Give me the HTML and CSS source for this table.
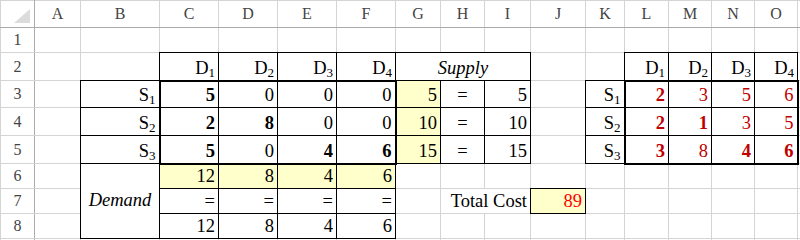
FILE: index.html
```html
<!DOCTYPE html>
<html>
<head>
<meta charset="utf-8">
<link rel="stylesheet" href="styles.css">
</head>
<body>
<table class="sheet">
  <colgroup>
    <col class="w-rh"><col class="w-a"><col class="w-b"><col class="w-c"><col class="w-c"><col class="w-c"><col class="w-c">
    <col class="w-g"><col class="w-h"><col class="w-i"><col class="w-j"><col class="w-k"><col class="w-l"><col class="w-m"><col class="w-m"><col class="w-m"><col class="w-p">
  </colgroup>
  <tr class="r-head">
    <th class="corner"><svg class="tri" width="20" height="16" viewBox="0 0 20 16"><polygon points="17,0 17,14 1,14" fill="#dcdcdc"/></svg></th>
    <th class="colh">A</th><th class="colh">B</th><th class="colh">C</th><th class="colh">D</th><th class="colh">E</th><th class="colh">F</th><th class="colh">G</th><th class="colh">H</th><th class="colh">I</th><th class="colh">J</th><th class="colh">K</th><th class="colh">L</th><th class="colh">M</th><th class="colh">N</th><th class="colh">O</th><th class="colh"></th>
  </tr>
  <tr class="r-1">
    <th class="rowh">1</th><td></td><td></td><td></td><td></td><td></td><td></td><td></td><td></td><td></td><td></td><td></td><td></td><td></td><td></td><td></td><td></td>
  </tr>
  <tr class="r-2">
    <th class="rowh">2</th><td></td><td></td>
    <td class="box">D<span class="sub">1</span></td>
    <td class="box">D<span class="sub">2</span></td>
    <td class="box">D<span class="sub">3</span></td>
    <td class="box">D<span class="sub">4</span></td>
    <td class="box ctr it" colspan="3">Supply</td>
    <td></td><td></td>
    <td class="box">D<span class="sub">1</span></td>
    <td class="box">D<span class="sub">2</span></td>
    <td class="box">D<span class="sub">3</span></td>
    <td class="box">D<span class="sub">4</span></td>
    <td></td>
  </tr>
  <tr class="r-3">
    <th class="rowh">3</th><td></td>
    <td class="box">S<span class="sub">1</span></td>
    <td class="box tl tt b">5</td><td class="box tt">0</td><td class="box tt">0</td><td class="box tt tr">0</td>
    <td class="box yel">5</td><td class="box ctr">=</td><td class="box">5</td>
    <td></td>
    <td class="box">S<span class="sub">1</span></td>
    <td class="box tl tt red b">2</td><td class="box tt red">3</td><td class="box tt red">5</td><td class="box tt tr red">6</td>
    <td></td>
  </tr>
  <tr class="r-4">
    <th class="rowh">4</th><td></td>
    <td class="box">S<span class="sub">2</span></td>
    <td class="box tl b">2</td><td class="box b">8</td><td class="box">0</td><td class="box tr">0</td>
    <td class="box yel">10</td><td class="box ctr">=</td><td class="box">10</td>
    <td></td>
    <td class="box">S<span class="sub">2</span></td>
    <td class="box tl red b">2</td><td class="box red b">1</td><td class="box red">3</td><td class="box tr red">5</td>
    <td></td>
  </tr>
  <tr class="r-5">
    <th class="rowh">5</th><td></td>
    <td class="box">S<span class="sub">3</span></td>
    <td class="box tl tb b">5</td><td class="box tb">0</td><td class="box tb b">4</td><td class="box tb tr b">6</td>
    <td class="box yel">15</td><td class="box ctr">=</td><td class="box">15</td>
    <td></td>
    <td class="box">S<span class="sub">3</span></td>
    <td class="box tl tb red b">3</td><td class="box tb red">8</td><td class="box tb red b">4</td><td class="box tb tr red b">6</td>
    <td></td>
  </tr>
  <tr class="r-6">
    <th class="rowh">6</th><td></td>
    <td class="box ctr mid it" rowspan="3">Demand</td>
    <td class="box yel">12</td><td class="box yel">8</td><td class="box yel">4</td><td class="box yel">6</td>
    <td></td><td></td><td></td><td></td><td></td><td></td><td></td><td></td><td></td><td></td>
  </tr>
  <tr class="r-7">
    <th class="rowh">7</th><td></td>
    <td class="box">=</td><td class="box">=</td><td class="box">=</td><td class="box">=</td>
    <td></td><td colspan="2">Total Cost</td><td class="box yel bright">89</td>
    <td></td><td></td><td></td><td></td><td></td><td></td>
  </tr>
  <tr class="r-8">
    <th class="rowh">8</th><td></td>
    <td class="box">12</td><td class="box">8</td><td class="box">4</td><td class="box">6</td>
    <td></td><td></td><td></td><td></td><td></td><td></td><td></td><td></td><td></td><td></td>
  </tr>
  <tr class="r-9">
    <th class="rowh"></th><td></td><td></td><td></td><td></td><td></td><td></td><td></td><td></td><td></td><td></td><td></td><td></td><td></td><td></td><td></td><td></td>
  </tr>
</table>
</body>
</html>
```

FILE: styles.css
```css
html, body {
  margin: 0;
  padding: 0;
  background: #fff;
  overflow: hidden;
  font-family: "Liberation Serif", serif;
}

.sheet {
  border-collapse: collapse;
  table-layout: fixed;
  width: 837px;
  color: #000;
  font-family: "Liberation Serif", serif;
}

.w-rh { width: 34px; }
.w-a { width: 46px; }
.w-b { width: 79px; }
.w-c { width: 59px; }
.w-g { width: 45px; }
.w-h { width: 44px; }
.w-i { width: 46px; }
.w-j { width: 55px; }
.w-k { width: 39px; }
.w-l { width: 44px; }
.w-m { width: 43px; }
.w-p { width: 40px; }

.sheet td,
.sheet th {
  font-family: "Liberation Serif", serif !important;
  font-size: 18.5px;
  border: 1px solid #d4d4d4;
  padding: 0 3px 1px 3px;
  white-space: nowrap;
  overflow: hidden;
  vertical-align: bottom;
  text-align: right;
  line-height: normal;
  font-weight: normal;
}

.r-head { height: 27px; }
.r-1 { height: 25px; }
.r-2 { height: 28px; }
.r-3 { height: 27px; }
.r-4 { height: 28px; }
.r-5 { height: 28px; }
.r-6 { height: 25px; }
.r-7 { height: 25px; }
.r-8 { height: 25px; }
.r-9 { height: 25px; }

.sheet th.colh {
  font-size: 16px;
  color: #444;
  text-align: center;
  vertical-align: middle;
  padding: 0;
  border-bottom-color: #ababab;
}

.sheet th.rowh {
  font-size: 16px;
  color: #444;
  text-align: center;
  vertical-align: middle;
  padding: 0;
  border-right-color: #ababab;
}

.sheet th.corner {
  padding: 0 1px 2px 0;
  vertical-align: bottom;
  border-right-color: #ababab;
  border-bottom-color: #ababab;
}

.tri {
  display: block;
  margin-left: auto;
}

.sub {
  font-size: 13px;
  vertical-align: -3px;
  line-height: 0;
}

.sheet td.box { border: 1px double #000; }
.sheet td.tt { border-top: 2px solid #000; }
.sheet td.tb { border-bottom: 2px solid #000; }
.sheet td.tl { border-left: 2px solid #000; }
.sheet td.tr { border-right: 2px solid #000; }

.ctr { text-align: center !important; }
.mid { vertical-align: middle !important; }
.it { font-style: italic; }
.b { font-weight: bold !important; }
.yel { background: #ffffcc; }
.red { color: #c00000; }
.bright { color: #ff0000; }
```
